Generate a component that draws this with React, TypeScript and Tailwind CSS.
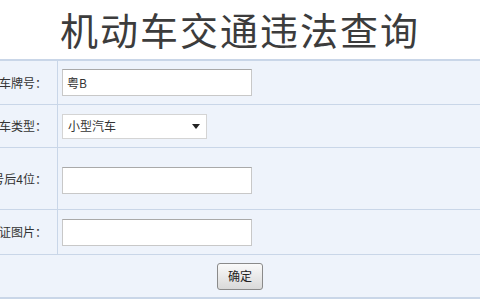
import { ChevronDown } from "lucide-react";

const font = { fontFamily: '"Noto Sans CJK SC", "Noto Sans", sans-serif' };

function Label({ text }: { text: string }) {
  return (
    <div className="flex w-[58px] shrink-0 items-center justify-end overflow-hidden whitespace-nowrap border-r border-[#c9d6e8] pr-[10px] text-[12px] text-[#333]">
      {text}
    </div>
  );
}

function TextBox({ value = "" }: { value?: string }) {
  return (
    <input
      readOnly
      value={value}
      className="h-[27px] w-[190px] border border-[#c8c8c8] border-t-[#a9a9a9] bg-white px-[4px] text-[12px] text-[#333] outline-none"
      style={font}
    />
  );
}

export default function App() {
  return (
    <div className="h-[300px] w-[480px] overflow-hidden bg-white" style={font}>
      <h1 className="flex h-[59px] items-center justify-center pb-[2px] text-[38px] font-normal leading-none tracking-[2px] text-[#3c3c3c]">
        机动车交通违法查询
      </h1>
      <div className="border-t-2 border-[#c9d6e8] bg-[#eef3fb]">
        <div className="flex h-[44px] border-b border-[#c9d6e8]">
          <Label text="机动车牌号：" />
          <div className="flex items-center pl-[4px]">
            <TextBox value="粤B" />
          </div>
        </div>
        <div className="flex h-[43px] border-b border-[#c9d6e8]">
          <Label text="机动车类型：" />
          <div className="flex items-center pl-[4px]">
            <div className="flex h-[25px] w-[145px] items-center justify-between border border-[#d4d4d4] bg-white pl-[5px] pr-[6px] text-[12px] text-[#333]">
              <span>小型汽车</span>
              <svg width="8" height="5" viewBox="0 0 8 5">
                <path d="M0 0h8L4 5z" fill="#222" />
              </svg>
            </div>
          </div>
        </div>
        <div className="flex h-[62px] border-b border-[#c9d6e8]">
          <Label text="车架号后4位：" />
          <div className="flex items-center pl-[4px] pt-[4px]">
            <TextBox />
          </div>
        </div>
        <div className="flex h-[45px] border-b border-[#c9d6e8]">
          <Label text="验证图片：" />
          <div className="flex items-center pl-[4px]">
            <TextBox />
          </div>
        </div>
        <div className="flex h-[44px] items-center justify-center border-b-2 border-[#c9d6e8]">
          <button className="h-[27px] w-[46px] rounded-[3px] border border-[#8a8a8a] bg-gradient-to-b from-[#fafafa] to-[#d9d9d9] text-[12px] text-[#222]">
            确定
          </button>
        </div>
      </div>
    </div>
  );
}
